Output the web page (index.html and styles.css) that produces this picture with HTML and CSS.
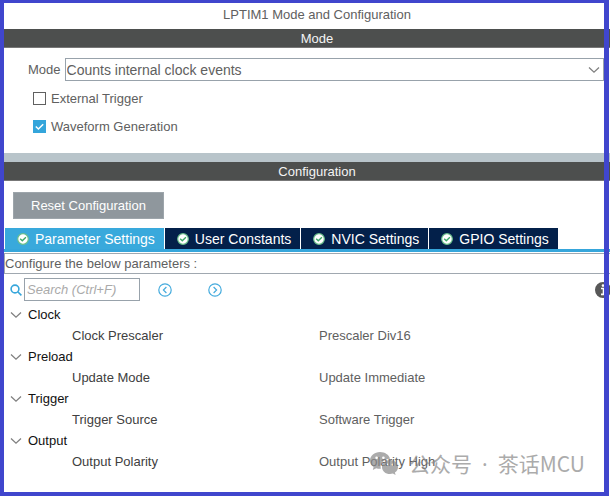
FILE: index.html
```html
<!DOCTYPE html>
<html lang="en">
<head>
<meta charset="utf-8">
<title>LPTIM1 Mode and Configuration</title>
<link rel="stylesheet" href="styles.css">
</head>
<body>
<svg class="defs" aria-hidden="true">
  <symbol id="ok" viewBox="0 0 12 12"><circle cx="6" cy="6" r="5.3" fill="#fff" stroke="#6cc08c" stroke-width="1.2"/><path d="M3.2 5.8 5.3 7.8 8.9 4.3" fill="none" stroke="#3da868" stroke-width="1.4"/></symbol>
  <symbol id="chevron" viewBox="0 0 12 8"><path d="M1 1.5 6 6.2 11 1.5" fill="none" stroke="#808080" stroke-width="1.3"/></symbol>
</svg>
<main class="page">
  <h1 class="title">LPTIM1 Mode and Configuration</h1>
  <h2 class="bar">Mode</h2>
  <section class="mode">
    <div class="field">
      <label for="mode">Mode</label>
      <div class="select-wrap">
        <select id="mode"><option>Counts internal clock events</option></select>
        <svg class="chevron"><use href="#chevron"/></svg>
      </div>
    </div>
    <label class="check"><input type="checkbox">External Trigger</label>
    <label class="check"><input type="checkbox" checked>Waveform Generation</label>
  </section>
  <div class="divider"></div>
  <h2 class="bar">Configuration</h2>
  <section class="config">
    <button class="reset" type="button">Reset Configuration</button>
    <nav class="tabs">
      <button class="tab active" type="button"><svg class="ok"><use href="#ok"/></svg>Parameter Settings</button>
      <button class="tab" type="button"><svg class="ok"><use href="#ok"/></svg>User Constants</button>
      <button class="tab" type="button"><svg class="ok"><use href="#ok"/></svg>NVIC Settings</button>
      <button class="tab" type="button"><svg class="ok"><use href="#ok"/></svg>GPIO Settings</button>
    </nav>
    <p class="hint">Configure the below parameters :</p>
    <div class="search">
      <svg class="glass" viewBox="0 0 12 12"><circle cx="5" cy="5" r="3.9"/><path d="M8 8 11.4 11.4"/></svg>
      <input type="text" placeholder="Search (Ctrl+F)" aria-label="Search">
      <button class="step" type="button" aria-label="Previous"><svg viewBox="0 0 14 14"><circle cx="7" cy="7" r="6.2"/><path d="M8.4 4 5.4 7 8.4 10"/></svg></button>
      <button class="step" type="button" aria-label="Next"><svg viewBox="0 0 14 14"><circle cx="7" cy="7" r="6.2"/><path d="M5.6 4 8.6 7 5.6 10"/></svg></button>
      <svg class="info" viewBox="0 0 16 16"><circle cx="8" cy="8" r="8" fill="#585858"/><path d="M6 6.500H8.500V12M6 12.400H11" fill="none" stroke="#fff" stroke-width="1.600"/><circle cx="8" cy="3.600" r="1.300" fill="#fff"/></svg>
    </div>
    <div class="tree">
      <div class="group"><svg class="chevron"><use href="#chevron"/></svg>Clock</div>
      <div class="row"><span class="name">Clock Prescaler</span><span>Prescaler Div16</span></div>
      <div class="group"><svg class="chevron"><use href="#chevron"/></svg>Preload</div>
      <div class="row"><span class="name">Update Mode</span><span>Update Immediate</span></div>
      <div class="group"><svg class="chevron"><use href="#chevron"/></svg>Trigger</div>
      <div class="row"><span class="name">Trigger Source</span><span>Software Trigger</span></div>
      <div class="group"><svg class="chevron"><use href="#chevron"/></svg>Output</div>
      <div class="row"><span class="name">Output Polarity</span><span>Output Polarity High</span></div>
    </div>
  </section>
</main>
<div class="frame"></div>
<div class="watermark">
  <svg viewBox="0 0 28 24"><path fill-rule="evenodd" d="M10 0C4.500 0 0 3.800 0 8.500c0 2.700 1.400 5 3.600 6.500L2.800 18l3.400-1.800c1.200.4 2.500.6 3.800.6h.8C9.500 11 14.500 6.600 20 6.700C19 2.800 14.900 0 10 0ZM6.600 4.500a1.300 1.300 0 1 1 0 2.600 1.300 1.300 0 0 1 0-2.600Zm6.800 0a1.300 1.300 0 1 1 0 2.600 1.300 1.300 0 0 1 0-2.600Z"/><path fill-rule="evenodd" d="M20 7.900c-4.500 0-8 3.200-8 7.100s3.500 7.100 8 7.100c1 0 2-.2 2.900-.5l2.700 1.500-.7-2.500c1.900-1.300 3.100-3.300 3.100-5.600 0-3.900-3.500-7.100-8-7.100Zm-2.700 3.600a1.100 1.100 0 1 1 0 2.200 1.100 1.100 0 0 1 0-2.200Zm5.400 0a1.100 1.100 0 1 1 0 2.200 1.100 1.100 0 0 1 0-2.200Z"/></svg>
  <span lang="zh">公众号<span class="dot">·</span>茶话MCU</span>
</div>
</body>
</html>
```
FILE: styles.css
```css
* { box-sizing: border-box; }

body {
  position: relative;
  min-height: 100vh;
  margin: 0;
  overflow: hidden;
  background: #fff;
  color: #606060;
  font: 13px/20px "Liberation Sans", Arial, sans-serif;
}

button, input, select { margin: 0; font: inherit; color: inherit; }

.defs { position: absolute; width: 0; height: 0; }

/* The panel runs on past the right edge of the window. */
.page { margin-right: -20px; padding: 3px 0 5px 4px; }

.title {
  margin: 0;
  padding: 2px 0 4px;
  font-size: 13px;
  font-weight: 400;
  text-align: center;
}

.bar {
  height: 19px;
  margin: 0;
  border-bottom: 1px solid #777;
  background: #4d4f4e;
  color: #f4f4f4;
  font-size: 13px;
  font-weight: 400;
  line-height: 19px;
  text-align: center;
}

.mode {
  display: flex;
  flex-direction: column;
  gap: 7px;
  padding: 10px 26px 16px 24px;
}

.field { display: flex; align-items: center; gap: 4px; }
.select-wrap { position: relative; flex: 1; }
.select-wrap select {
  display: block;
  width: 100%;
  height: 23px;
  padding: 0 1px;
  border: 1px solid #98a2ab;
  border-radius: 0;
  background: #fff;
  font-size: 14px;
  appearance: none;
}
.select-wrap .chevron { position: absolute; top: 8px; right: 4px; pointer-events: none; }

.chevron { flex: none; width: 12px; height: 8px; }

.check { display: flex; align-items: center; gap: 5px; height: 21px; margin-left: 5px; }
.check input {
  width: 13px;
  height: 13px;
  border: 1px solid #606060;
  background: #fff;
  appearance: none;
}
.check input:checked {
  border-color: #34a5db;
  background: #34a5db url("data:image/svg+xml,%3Csvg xmlns='http://www.w3.org/2000/svg' viewBox='0 0 11 11'%3E%3Cpath d='M1.800 5.500 4.400 8 9.200 3.200' fill='none' stroke='white' stroke-width='1.500'/%3E%3C/svg%3E");
}

.divider { height: 9px; background: #b8c4ca; }

.config { padding-top: 11px; }

.reset {
  display: block;
  height: 27px;
  margin-left: 9px;
  padding: 0 17px;
  border: 1px solid #9da5ab;
  background: #8f979d;
  color: #fff;
}

.tabs {
  display: flex;
  gap: 1px;
  margin-top: 9px;
  padding-left: 1px;
  border-bottom: 3px solid #36a6db;
}
.tab {
  display: flex;
  align-items: center;
  gap: 6px;
  height: 21px;
  padding: 0 9px 0 12px;
  border: 0;
  background: #03204a;
  color: #fff;
  font-size: 14px;
  white-space: nowrap;
}
.tab.active { background: #39a9dc; }
.ok { width: 12px; height: 12px; }

.hint {
  margin: 1px 0 0;
  border: 1px solid #a0a8b0;
  padding: 0;
  line-height: 19px;
}

.search { display: flex; align-items: center; margin: 4px 19px 0 6px; }
.search input {
  width: 116px;
  height: 23px;
  margin: 0 18px 0 2px;
  padding: 0 2px;
  border: 1px solid #98a2ab;
  border-radius: 0;
}
.search input::placeholder { color: #aaa; font-style: italic; opacity: 1; }
.glass { width: 12px; height: 12px; fill: none; stroke: #36a6db; stroke-width: 1.6; }
.step {
  width: 14px;
  height: 14px;
  margin-right: 36px;
  padding: 0;
  border: 0;
  background: none;
}
.step svg { display: block; fill: none; stroke: #45abdd; stroke-width: 1.2; }
.info { width: 16px; height: 16px; margin-left: auto; }

.tree { padding: 3px 0 0 6px; }
.group, .row { display: flex; align-items: center; height: 21px; }
.group { gap: 6px; color: #111; }
.row { padding-left: 62px; }
.name { flex: none; width: 247px; color: #404040; }

.frame {
  position: absolute;
  inset: 0 1px 0 0;
  border: solid #4046cd;
  border-width: 3px 5px 4px 4px;
  pointer-events: none;
}

.watermark {
  position: absolute;
  right: 25px;
  bottom: 17px;
  display: flex;
  align-items: center;
  gap: 11px;
  color: #888;
  font: 21px/30px "Noto Sans CJK SC", sans-serif;
  opacity: 0.7;
  pointer-events: none;
}
.watermark svg { width: 28px; height: 24px; fill: #888; }
.dot { margin: 0 10px; font-family: "Noto Sans", sans-serif; }
```
